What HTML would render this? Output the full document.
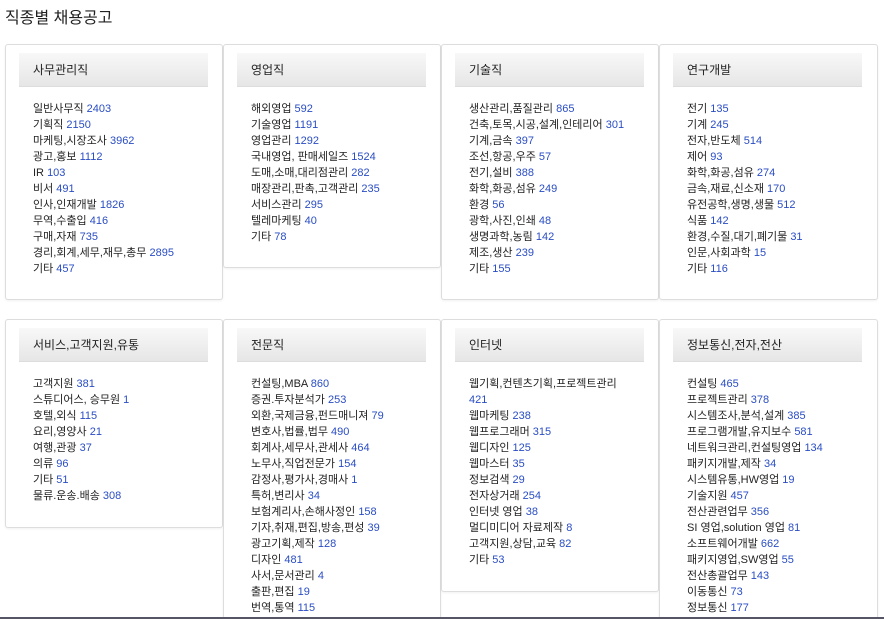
<!DOCTYPE html>
<html style="overflow:hidden;height:619px"><head><meta charset="utf-8"><style>
body{margin:0;width:884px;height:619px;overflow:hidden;background:#fff;font-family:"Liberation Sans","Noto Sans CJK KR",sans-serif;position:relative}
h1{position:absolute;left:5px;top:4px;margin:0;font-size:16px;font-weight:normal;color:#222}
.card{position:absolute;width:218px;border:1px solid #ddd;border-radius:3px;box-shadow:0 1px 2px rgba(0,0,0,.06);background:#fff;box-sizing:border-box}
.hd{position:absolute;left:13px;top:8px;width:189px;height:34px;background:linear-gradient(#f8f8f8,#e6e6e6);border-bottom:1px solid #ddd;font-size:12px;line-height:34px;padding-left:14px;box-sizing:border-box;color:#222}
ul{position:absolute;left:27px;top:56px;margin:0;padding:0;list-style:none;font-size:11px;line-height:16px;color:#222;width:180px}
ul span{color:#2a4dc4}
.bar{position:absolute;left:0;top:617px;width:884px;height:2px;background:#556}
</style></head><body>
<h1>직종별 채용공고</h1>

<div class="card" style="left:5px;top:44px;height:256px"><div class="hd">사무관리직</div><ul>
<li>일반사무직 <span>2403</span></li><li>기획직 <span>2150</span></li><li>마케팅,시장조사 <span>3962</span></li><li>광고,홍보 <span>1112</span></li><li>IR <span>103</span></li><li>비서 <span>491</span></li><li>인사,인재개발 <span>1826</span></li><li>무역,수출입 <span>416</span></li><li>구매,자재 <span>735</span></li><li>경리,회계,세무,재무,총무 <span>2895</span></li><li>기타 <span>457</span></li></ul></div>

<div class="card" style="left:223px;top:44px;height:224px"><div class="hd">영업직</div><ul>
<li>해외영업 <span>592</span></li><li>기술영업 <span>1191</span></li><li>영업관리 <span>1292</span></li><li>국내영업, 판매세일즈 <span>1524</span></li><li>도매,소매,대리점관리 <span>282</span></li><li>매장관리,판촉,고객관리 <span>235</span></li><li>서비스관리 <span>295</span></li><li>텔레마케팅 <span>40</span></li><li>기타 <span>78</span></li></ul></div>

<div class="card" style="left:441px;top:44px;height:256px"><div class="hd">기술직</div><ul>
<li>생산관리,품질관리 <span>865</span></li><li>건축,토목,시공,설계,인테리어 <span>301</span></li><li>기계,금속 <span>397</span></li><li>조선,항공,우주 <span>57</span></li><li>전기,설비 <span>388</span></li><li>화학,화공,섬유 <span>249</span></li><li>환경 <span>56</span></li><li>광학,사진,인쇄 <span>48</span></li><li>생명과학,농림 <span>142</span></li><li>제조,생산 <span>239</span></li><li>기타 <span>155</span></li></ul></div>

<div class="card" style="left:659px;top:44px;height:256px;width:219px"><div class="hd">연구개발</div><ul>
<li>전기 <span>135</span></li><li>기계 <span>245</span></li><li>전자,반도체 <span>514</span></li><li>제어 <span>93</span></li><li>화학,화공,섬유 <span>274</span></li><li>금속,재료,신소재 <span>170</span></li><li>유전공학,생명,생물 <span>512</span></li><li>식품 <span>142</span></li><li>환경,수질,대기,폐기물 <span>31</span></li><li>인문,사회과학 <span>15</span></li><li>기타 <span>116</span></li></ul></div>

<div class="card" style="left:5px;top:319px;height:209px"><div class="hd">서비스,고객지원,유통</div><ul>
<li>고객지원 <span>381</span></li><li>스튜디어스, 승무원 <span>1</span></li><li>호텔,외식 <span>115</span></li><li>요리,영양사 <span>21</span></li><li>여행,관광 <span>37</span></li><li>의류 <span>96</span></li><li>기타 <span>51</span></li><li>물류.운송.배송 <span>308</span></li></ul></div>

<div class="card" style="left:223px;top:319px;height:300px;border-bottom:none"><div class="hd">전문직</div><ul>
<li>컨설팅,MBA <span>860</span></li><li>증권.투자분석가 <span>253</span></li><li>외환,국제금융,펀드매니져 <span>79</span></li><li>변호사,법률,법무 <span>490</span></li><li>회계사,세무사,관세사 <span>464</span></li><li>노무사,직업전문가 <span>154</span></li><li>감정사,평가사,경매사 <span>1</span></li><li>특허,변리사 <span>34</span></li><li>보험계리사,손해사정인 <span>158</span></li><li>기자,취재,편집,방송,편성 <span>39</span></li><li>광고기획,제작 <span>128</span></li><li>디자인 <span>481</span></li><li>사서,문서관리 <span>4</span></li><li>출판,편집 <span>19</span></li><li>번역,통역 <span>115</span></li></ul></div>

<div class="card" style="left:441px;top:319px;height:273px"><div class="hd">인터넷</div><ul style="width:160px">
<li>웹기획,컨텐츠기획,프로젝트관리 <span>421</span></li><li>웹마케팅 <span>238</span></li><li>웹프로그래머 <span>315</span></li><li>웹디자인 <span>125</span></li><li>웹마스터 <span>35</span></li><li>정보검색 <span>29</span></li><li>전자상거래 <span>254</span></li><li>인터넷 영업 <span>38</span></li><li>멀디미디어 자료제작 <span>8</span></li><li>고객지원,상담,교육 <span>82</span></li><li>기타 <span>53</span></li></ul></div>

<div class="card" style="left:659px;top:319px;height:300px;width:219px;border-bottom:none"><div class="hd">정보통신,전자,전산</div><ul>
<li>컨설팅 <span>465</span></li><li>프로젝트관리 <span>378</span></li><li>시스템조사,분석,설계 <span>385</span></li><li>프로그램개발,유지보수 <span>581</span></li><li>네트워크관리,컨설팅영업 <span>134</span></li><li>패키지개발,제작 <span>34</span></li><li>시스템유통,HW영업 <span>19</span></li><li>기술지원 <span>457</span></li><li>전산관련업무 <span>356</span></li><li>SI 영업,solution 영업 <span>81</span></li><li>소프트웨어개발 <span>662</span></li><li>패키지영업,SW영업 <span>55</span></li><li>전산총괄업무 <span>143</span></li><li>이동통신 <span>73</span></li><li>정보통신 <span>177</span></li></ul></div>

<div class="bar"></div>
</body></html>
